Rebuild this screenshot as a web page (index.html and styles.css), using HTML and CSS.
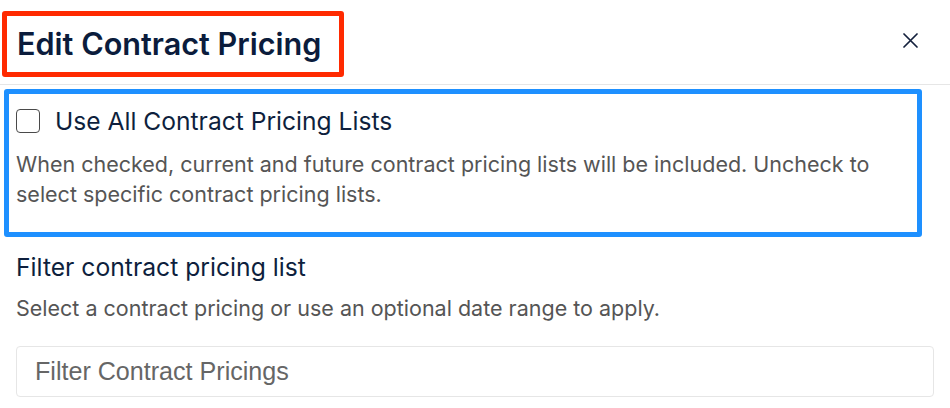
FILE: index.html
```html
<!DOCTYPE html>
<html lang="en">
<head>
<meta charset="utf-8">
<title>Edit Contract Pricing</title>
<link rel="stylesheet" href="styles.css">
</head>
<body>
<div class="modal">
  <div class="header">
    <div class="title-box"><h1 class="title">Edit Contract Pricing</h1></div>
    <button class="close" aria-label="Close">
      <svg width="15" height="15" viewBox="0 0 15 15"><path d="M1 1L14 14M14 1L1 14" stroke="#14213d" stroke-width="1.7" stroke-linecap="round"/></svg>
    </button>
  </div>
  <div class="body">
    <div class="all-box">
      <label class="check-row">
        <span class="checkbox"></span>
        <span class="check-label">Use All Contract Pricing Lists</span>
      </label>
      <p class="help">When checked, current and future contract pricing lists will be included. Uncheck to select specific contract pricing lists.</p>
    </div>
    <div class="section">
      <div class="section-title">Filter contract pricing list</div>
      <p class="section-help">Select a contract pricing or use an optional date range to apply.</p>
      <div class="input">Filter Contract Pricings</div>
    </div>
  </div>
</div>
</body>
</html>
```
FILE: styles.css
```css
* { box-sizing: border-box; }
html, body { margin: 0; padding: 0; background: #ffffff; }
body { font-family: Inter, "Noto Sans", sans-serif; color: #0e1f3d; width: 950px; height: 408px; overflow: hidden; }

.header {
  display: flex;
  align-items: center;
  justify-content: space-between;
  padding: 11px 32px 7px 2px;
  border-bottom: 1px solid #e6e6e6;
  height: 85px;
}
.title-box {
  border: 5px solid #ff2a00;
  border-radius: 3px;
  height: 66px;
  padding: 0 18px 0 10px;
  display: flex;
  align-items: center;
}
.title {
  margin: 0;
  font-size: 30.6px;
  font-weight: 600;
  color: #0b1c3c;
  line-height: 1;
}
.close {
  background: none;
  border: 0;
  padding: 0;
  width: 15px;
  height: 15px;
  display: flex;
  margin-top: -8px;
}

.body { padding: 4px 16px 0 4px; }
.all-box {
  border: 5px solid #1e90ff;
  border-radius: 3px;
  width: 918px;
  padding: 15px 7px 23px 7px;
}
.check-row { display: flex; align-items: center; gap: 15px; }
.checkbox {
  width: 24px; height: 24px;
  border: 1px solid #4a4a4a;
  border-radius: 4px;
  background: #fff;
  flex: none;
}
.check-label { font-size: 24.6px; line-height: 24px; color: #0e1f3d; }
.help {
  margin: 16px 0 0;
  font-size: 21.5px;
  line-height: 30px;
  color: #555555;
}
.section { padding: 15px 0 0 12px; }
.section-title { font-size: 24.7px; line-height: 30px; color: #0e1f3d; }
.section-help {
  margin: 11px 0 0;
  font-size: 21.5px;
  line-height: 30px;
  color: #555555;
}
.input {
  margin-top: 23px;
  height: 51px;
  border: 1px solid #e6e6e6;
  border-radius: 4px;
  padding: 0 18px;
  display: flex;
  align-items: center;
  font-family: "Liberation Sans", Arial, sans-serif;
  font-size: 25.1px;
  color: #666666;
}
```
